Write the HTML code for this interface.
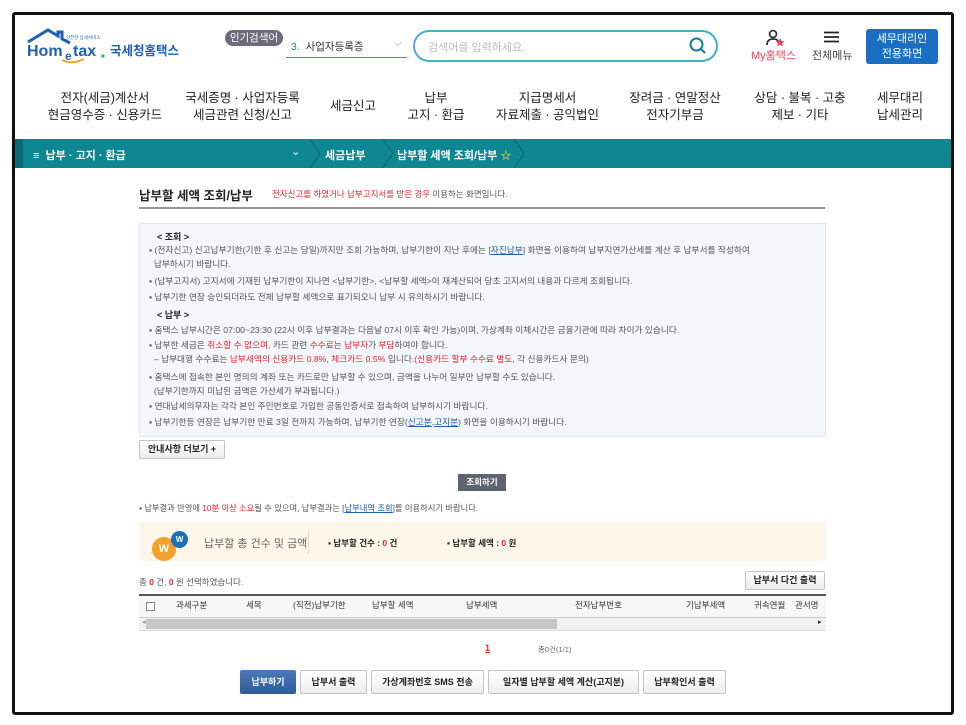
<!DOCTYPE html>
<html><head><meta charset="utf-8">
<style>
*{margin:0;padding:0;box-sizing:border-box}
body{width:966px;height:725px;background:#fff;font-family:"Liberation Sans","Noto Sans CJK KR",sans-serif;color:#333;position:relative;overflow:hidden}
.a{position:absolute;white-space:nowrap}
.frame{position:absolute;left:12px;top:12px;width:942px;height:703px;border:3px solid #111;border-radius:3px}
.nav{font-size:12.5px;color:#222;text-align:center;line-height:17px}
.info{font-size:8.7px;color:#555;line-height:14px}
.r{color:#e8262b}
.u{color:#1c5fb0;text-decoration:underline}
.btn{position:absolute;border:1px solid #c4c4c4;background:linear-gradient(#fff,#eee);font-size:9px;color:#222;text-align:center;border-radius:2px}
.th{position:absolute;top:599px;font-size:8.5px;color:#333}
</style></head><body>
<div class="frame"></div>

<!-- logo -->
<svg class="a" style="left:26px;top:28px" width="82" height="36" viewBox="0 0 82 36">
<path d="M2 14 L22 2 L32 8 L32 4 L36 4 L36 11 L44 15" fill="none" stroke="#1d62b0" stroke-width="3"/>
<text x="1" y="28" font-family="Liberation Sans" font-weight="bold" font-size="16" fill="#1d62b0">Hom</text>
<text x="39" y="32" font-family="Liberation Sans" font-weight="bold" font-size="12" fill="#1d62b0">e</text>
<text x="47" y="28" font-family="Liberation Sans" font-weight="bold" font-size="16" fill="#1d62b0">tax</text>
<path d="M36 32 Q46 37 58 31" stroke="#f1a22a" stroke-width="2" fill="none"/>
<circle cx="77" cy="28" r="1.6" fill="#2bb34a"/>
</svg>
<div class="a" style="left:66px;top:35px;font-size:4.5px;color:#1d62b0">안전한 납세서비스</div>
<div class="a" style="left:110px;top:40px;font-size:12.5px;font-weight:bold;color:#1d62b0">국세청홈택스</div>

<div class="a" style="left:225px;top:30px;width:58px;height:16px;background:#696c7d;border-radius:8px;color:#fff;font-size:10.5px;text-align:center;line-height:16px">인기검색어</div>
<div class="a" style="left:291px;top:39px;font-size:10.5px;color:#333"><span style="color:#1a8a96">3.</span>&nbsp; 사업자등록증</div>
<div class="a" style="left:394px;top:38px;font-size:10px;color:#888">⌵</div>
<div class="a" style="left:286px;top:57px;width:121px;height:1px;background:#2a9aa6"></div>
<div class="a" style="left:413px;top:30px;width:305px;height:32px;border:2px solid #3bb5c4;border-radius:16px;border-left-color:#5aa0e8"></div>
<div class="a" style="left:428px;top:39px;font-size:11px;color:#bbb">검색어를 입력하세요.</div>
<svg class="a" style="left:688px;top:36px" width="20" height="20"><circle cx="8.5" cy="8.5" r="6" fill="none" stroke="#16808c" stroke-width="2"/><path d="M13 13 L17 17" stroke="#16808c" stroke-width="2.2"/></svg>

<svg class="a" style="left:766px;top:29px" width="20" height="18"><circle cx="7" cy="5" r="3.5" fill="none" stroke="#223" stroke-width="1.6"/><path d="M1 16 Q1 10 7 10 Q11 10 12 12" fill="none" stroke="#223" stroke-width="1.6"/><path d="M14 9 l1.5 3 3 .3 -2.3 2 .7 3 -2.9-1.6 -2.9 1.6 .7-3 -2.3-2 3-.3z" fill="#e8435a"/></svg>
<div class="a" style="left:751px;top:47px;font-size:11px;color:#e8435a">My홈택스</div>
<svg class="a" style="left:824px;top:31px" width="16" height="12"><path d="M0 1.5H15M0 6H15M0 10.5H15" stroke="#222" stroke-width="1.8"/></svg>
<div class="a" style="left:812px;top:47px;font-size:11px;color:#444">전체메뉴</div>
<div class="a" style="left:866px;top:29px;width:72px;height:35px;background:#1a6fc2;border-radius:3px;color:#fff;font-size:11px;text-align:center;line-height:15px;padding-top:3px">세무대리인<br>전용화면</div>

<!-- nav -->
<div class="a nav" style="left:40px;top:90px;width:130px">전자(세금)계산서<br>현금영수증 · 신용카드</div>
<div class="a nav" style="left:175px;top:90px;width:135px">국세증명 · 사업자등록<br>세금관련 신청/신고</div>
<div class="a nav" style="left:320px;top:98px;width:66px">세금신고</div>
<div class="a nav" style="left:400px;top:90px;width:72px">납부<br>고지 · 환급</div>
<div class="a nav" style="left:490px;top:90px;width:115px">지급명세서<br>자료제출 · 공익법인</div>
<div class="a nav" style="left:620px;top:90px;width:110px">장려금 · 연말정산<br>전자기부금</div>
<div class="a nav" style="left:745px;top:90px;width:110px">상담 · 불복 · 고충<br>제보 · 기타</div>
<div class="a nav" style="left:865px;top:90px;width:70px">세무대리<br>납세관리</div>

<!-- teal bar -->
<div class="a" style="left:15px;top:139px;width:936px;height:29px;background:#0f8793"></div>
<div class="a" style="left:15px;top:139px;width:8px;height:29px;background:#0b6b75"></div>
<div class="a" style="left:33px;top:147px;font-size:11px;color:#fff;font-weight:bold">≡ &nbsp;납부 · 고지 · 환급</div>
<div class="a" style="left:291px;top:145px;font-size:11px;color:#fff">⌄</div>
<svg class="a" style="left:308px;top:139px" width="230" height="29"><path d="M2 0 L12 14.5 L2 29 M75 0 L85 14.5 L75 29 M206 0 L216 14.5 L206 29" fill="none" stroke="#0a6570" stroke-width="1"/></svg>
<div class="a" style="left:325px;top:147px;font-size:11px;color:#fff;font-weight:bold">세금납부</div>
<div class="a" style="left:397px;top:147px;font-size:11px;color:#fff;font-weight:bold">납부할 세액 조회/납부 <span style="color:#e6d34a">☆</span></div>

<!-- title -->
<div class="a" style="left:139px;top:185px;font-size:12.5px;font-weight:bold;color:#222">납부할 세액 조회/납부</div>
<div class="a" style="left:272px;top:188px;font-size:8.5px;color:#e8262b">전자신고를 하였거나 납부고지서를 받은 경우 <span style="color:#555">이용하는 화면입니다.</span></div>
<div class="a" style="left:139px;top:207px;width:686px;height:2px;background:#999"></div>

<!-- info box -->
<div class="a" style="left:139px;top:223px;width:687px;height:214px;background:#f3f6fb;border:1px solid #e1e6ee"></div>
<div class="a info" style="left:157px;top:230px;font-weight:bold;color:#222;font-size:9px">&lt; 조회 &gt;</div>
<div class="a info" style="left:149px;top:243px">▪ (전자신고) 신고납부기한(기한 후 신고는 당일)까지만 조회 가능하며, 납부기한이 지난 후에는 [<span class="u">자진납부</span>] 화면을 이용하여 납부지연가산세를 계산 후 납부서를 작성하여<br>&nbsp;&nbsp;납부하시기 바랍니다.</div>
<div class="a info" style="left:149px;top:274px">▪ (납부고지서) 고지서에 기재된 납부기한이 지나면 &lt;납부기한&gt;, &lt;납부할 세액&gt;이 재계산되어 당초 고지서의 내용과 다르게 조회됩니다.</div>
<div class="a info" style="left:149px;top:290px">▪ 납부기한 연장 승인되더라도 전체 납부할 세액으로 표기되오니 납부 시 유의하시기 바랍니다.</div>
<div class="a info" style="left:157px;top:308px;font-weight:bold;color:#222;font-size:9px">&lt; 납부 &gt;</div>
<div class="a info" style="left:149px;top:323px">▪ 홈택스 납부시간은 07:00~23:30 (22시 이후 납부결과는 다음날 07시 이후 확인 가능)이며, 가상계좌 이체시간은 금융기관에 따라 차이가 있습니다.</div>
<div class="a info" style="left:149px;top:338px">▪ 납부한 세금은 <span class="r">취소할 수 없으며,</span> 카드 관련 <span class="r">수수료</span>는 <span class="r">납부자</span>가 <span class="r">부담</span>하여야 합니다.<br>&nbsp;&nbsp;– 납부대행 수수료는 <span class="r">납부세액의 신용카드 0.8%, 체크카드 0.5%</span> 입니다.<span class="r">(신용카드 할부 수수료 별도</span>, 각 신용카드사 문의)</div>
<div class="a info" style="left:149px;top:370px">▪ 홈택스에 접속한 본인 명의의 계좌 또는 카드로만 납부할 수 있으며, 금액을 나누어 일부만 납부할 수도 있습니다.<br>&nbsp;&nbsp;(납부기한까지 미납된 금액은 가산세가 부과됩니다.)</div>
<div class="a info" style="left:149px;top:399px">▪ 연대납세의무자는 각각 본인 주민번호로 가입한 공동인증서로 접속하여 납부하시기 바랍니다.</div>
<div class="a info" style="left:149px;top:415px">▪ 납부기한등 연장은 납부기한 만료 3일 전까지 가능하며, 납부기한 연장(<span class="u">신고분</span>,<span class="u">고지분</span>) 화면을 이용하시기 바랍니다.</div>

<div class="btn" style="left:139px;top:440px;width:86px;height:19px;line-height:17px;font-weight:bold">안내사항 더보기 +</div>
<div class="a" style="left:458px;top:474px;width:48px;height:17px;background:#5f6470;color:#fff;font-size:8.5px;text-align:center;line-height:17px;font-weight:bold">조회하기</div>
<div class="a" style="left:139px;top:502px;font-size:8.3px;color:#555">▪ 납부결과 반영에 <span class="r">10분 이상 소요</span>될 수 있으며, 납부결과는 [<span class="u">납부내역 조회</span>]를 이용하시기 바랍니다.</div>

<!-- summary -->
<div class="a" style="left:139px;top:522px;width:687px;height:39px;background:#fdf7ea"></div>
<div class="a" style="left:152px;top:537px;width:24px;height:24px;border-radius:50%;background:#f3a12a;color:#fff;font-size:11px;font-weight:bold;text-align:center;line-height:24px">W</div>
<div class="a" style="left:171px;top:531px;width:17px;height:17px;border-radius:50%;background:#1b6fba;color:#fff;font-size:8px;font-weight:bold;text-align:center;line-height:17px">W</div>
<div class="a" style="left:204px;top:535px;font-size:11px;color:#666">납부할 총 건수 및 금액</div>
<div class="a" style="left:308px;top:530px;width:1px;height:24px;background:#ddd"></div>
<div class="a" style="left:328px;top:537px;font-size:8.5px;font-weight:bold;color:#222">▪ 납부할 건수 : <span class="r">0</span> 건</div>
<div class="a" style="left:447px;top:537px;font-size:8.5px;font-weight:bold;color:#222">▪ 납부할 세액 : <span class="r">0</span> 원</div>

<div class="a" style="left:139px;top:576px;font-size:8.5px;color:#555">총 <b class="r">0</b> 건, <b class="r">0</b> 원 선택하였습니다.</div>
<div class="btn" style="left:745px;top:571px;width:80px;height:19px;line-height:17px;font-weight:bold">납부서 다건 출력</div>

<!-- table -->
<div class="a" style="left:139px;top:594px;width:687px;height:24px;border-top:2px solid #555;background:#f7f7f7;border-bottom:1px solid #ccc"></div>
<div class="a" style="left:146px;top:602px;width:9px;height:9px;border:1px solid #888;background:#fff"></div>
<div class="th" style="left:176px">과세구분</div>
<div class="th" style="left:246px">세목</div>
<div class="th" style="left:293px">(직전)납부기한</div>
<div class="th" style="left:372px">납부할 세액</div>
<div class="th" style="left:466px">납부세액</div>
<div class="th" style="left:575px">전자납부번호</div>
<div class="th" style="left:686px">기납부세액</div>
<div class="th" style="left:754px">귀속연월</div>
<div class="th" style="left:795px">관서명</div>
<div class="a" style="left:139px;top:618px;width:687px;height:13px;background:#f0f0f0;border-bottom:1px solid #ddd"></div>
<div class="a" style="left:146px;top:619px;width:411px;height:10px;background:#c6c6c6"></div>
<div class="a" style="left:142px;top:618px;font-size:7px;color:#999">◂</div>
<div class="a" style="left:818px;top:618px;font-size:7px;color:#222">▸</div>

<div class="a" style="left:485px;top:643px;font-size:9px;color:#e8262b;font-weight:bold;text-decoration:underline">1</div>
<div class="a" style="left:538px;top:644px;font-size:7.5px;color:#666">총0건(1/1)</div>

<div class="a" style="left:240px;top:670px;width:56px;height:24px;background:linear-gradient(#4a78b8,#2d5a9a);color:#fff;font-size:9px;text-align:center;line-height:24px;font-weight:bold;border-radius:2px">납부하기</div>
<div class="btn" style="left:300px;top:670px;width:67px;height:24px;line-height:22px;font-weight:bold">납부서 출력</div>
<div class="btn" style="left:371px;top:670px;width:113px;height:24px;line-height:22px;font-weight:bold">가상계좌번호 SMS 전송</div>
<div class="btn" style="left:488px;top:670px;width:151px;height:24px;line-height:22px;font-weight:bold">일자별 납부할 세액 계산(고지분)</div>
<div class="btn" style="left:643px;top:670px;width:83px;height:24px;line-height:22px;font-weight:bold">납부확인서 출력</div>
</body></html>
